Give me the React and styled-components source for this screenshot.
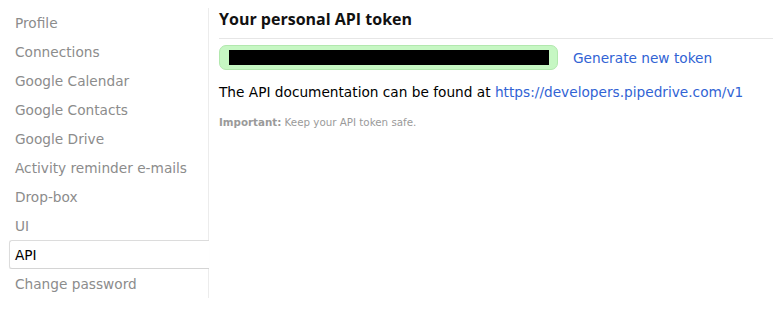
import React from 'react';
import styled, { createGlobalStyle } from 'styled-components';

const GlobalStyle = createGlobalStyle`
  html, body {
    margin: 0;
    padding: 0;
    background: #fff;
  }
  body {
    font-family: "DejaVu Sans", "Liberation Sans", sans-serif;
  }
`;

const Page = styled.div`
  display: flex;
  flex-direction: row;
  align-items: flex-start;
  width: 773px;
  height: 314px;
  overflow: hidden;
`;

const Sidebar = styled.ul`
  list-style: none;
  margin: 0;
  padding: 8px 0 0 0;
  width: 209px;
  flex-shrink: 0;
`;

const NavItem = styled.li`
  height: 29px;
  box-sizing: border-box;
  display: flex;
  align-items: center;
  margin-left: 9px;
  font-size: 13.7px;
  color: ${({ active }) => (active ? '#000' : '#8c8c8c')};
  background: #fff;
  border-right: ${({ active }) => (active ? 'none' : 'solid 1px #ececec')};
  border-top: ${({ active }) => (active ? 'solid 1px #dcdcdc' : 'none')};
  border-left: ${({ active }) => (active ? 'solid 1px #dcdcdc' : 'none')};
  border-bottom: ${({ active }) => (active ? 'solid 1px #d4d4d4' : 'none')};
  border-radius: ${({ active }) => (active ? '3px 0 0 3px' : '0')};
  box-shadow: ${({ active }) => (active ? '0 1px 1px rgba(0,0,0,0.06)' : 'none')};
  padding-left: ${({ active }) => (active ? '5px' : '6px')};
`;

const Content = styled.div`
  flex: 1;
  padding: 8px 0 0 10px;
`;

const Title = styled.h2`
  margin: 0;
  font-family: "Open Sans", sans-serif;
  font-weight: 700;
  font-size: 16px;
  line-height: 22px;
  color: #111;
  padding-bottom: 8px;
  border-bottom: solid 1px #e6e6e6;
`;

const TokenRow = styled.div`
  display: flex;
  align-items: center;
  margin-top: 6px;
`;

const TokenField = styled.div`
  width: 339px;
  height: 25px;
  box-sizing: border-box;
  padding: 4px 8px 4px 9px;
  background: #c6f7c3;
  border: solid 1px #b2e8ae;
  border-radius: 7px;
`;

const Redacted = styled.div`
  height: 100%;
  background: #000;
`;

const Link = styled.a`
  color: #3163d4;
  text-decoration: none;
  cursor: pointer;
`;

const GenerateLink = styled(Link)`
  margin-left: 15px;
  font-size: 13.7px;
`;

const DocText = styled.p`
  margin: 14px 0 0 0;
  font-size: 13.7px;
  color: #000;
`;

const Note = styled.p`
  margin: 16px 0 0 0;
  font-size: 10.3px;
  color: #9a9a9a;

  strong {
    font-weight: bold;
  }
`;

const items = [
  'Profile',
  'Connections',
  'Google Calendar',
  'Google Contacts',
  'Google Drive',
  'Activity reminder e-mails',
  'Drop-box',
  'UI',
  'API',
  'Change password',
];

const App = () => (
  <>
    <GlobalStyle />
    <Page>
      <Sidebar>
        {items.map(item => (
          <NavItem key={item} active={item === 'API'}>
            {item}
          </NavItem>
        ))}
      </Sidebar>
      <Content>
        <Title>Your personal API token</Title>
        <TokenRow>
          <TokenField>
            <Redacted />
          </TokenField>
          <GenerateLink>Generate new token</GenerateLink>
        </TokenRow>
        <DocText>
          The API documentation can be found at{' '}
          <Link>https://developers.pipedrive.com/v1</Link>
        </DocText>
        <Note>
          <strong>Important:</strong> Keep your API token safe.
        </Note>
      </Content>
    </Page>
  </>
);

export default App;
